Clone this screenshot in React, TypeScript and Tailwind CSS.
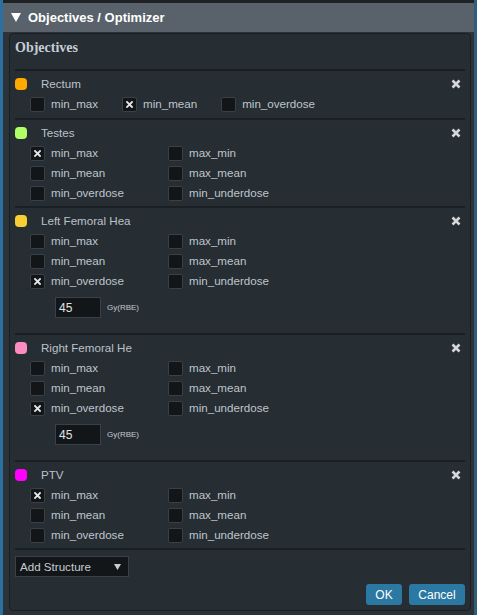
import React from 'react';

type Obj = { label: string; checked?: boolean };

interface Structure {
  name: string;
  color: string;
  inline?: boolean;
  objectives: Obj[];
  dose?: string;
}

const structures: Structure[] = [
  {
    name: 'Rectum',
    color: '#ffaa00',
    inline: true,
    objectives: [{ label: 'min_max' }, { label: 'min_mean', checked: true }, { label: 'min_overdose' }],
  },
  {
    name: 'Testes',
    color: '#b0ff66',
    objectives: [
      { label: 'min_max', checked: true },
      { label: 'max_min' },
      { label: 'min_mean' },
      { label: 'max_mean' },
      { label: 'min_overdose' },
      { label: 'min_underdose' },
    ],
  },
  {
    name: 'Left Femoral Hea',
    color: '#f7cf33',
    objectives: [
      { label: 'min_max' },
      { label: 'max_min' },
      { label: 'min_mean' },
      { label: 'max_mean' },
      { label: 'min_overdose', checked: true },
      { label: 'min_underdose' },
    ],
    dose: '45',
  },
  {
    name: 'Right Femoral He',
    color: '#ff8cbf',
    objectives: [
      { label: 'min_max' },
      { label: 'max_min' },
      { label: 'min_mean' },
      { label: 'max_mean' },
      { label: 'min_overdose', checked: true },
      { label: 'min_underdose' },
    ],
    dose: '45',
  },
  {
    name: 'PTV',
    color: '#ff00ff',
    objectives: [
      { label: 'min_max', checked: true },
      { label: 'max_min' },
      { label: 'min_mean' },
      { label: 'max_mean' },
      { label: 'min_overdose' },
      { label: 'min_underdose' },
    ],
  },
];

const Checkbox = ({ checked }: { checked?: boolean }) => (
  <span className="w-[15px] h-[15px] shrink-0 bg-[#131619] border border-[#3a4046] rounded-[2px] flex items-center justify-center">
    {checked && (
      <svg width="7" height="7" viewBox="0 0 7 7">
        <path d="M1 1L6 6M6 1L1 6" stroke="#e6e6e6" strokeWidth="1.8" strokeLinecap="square" />
      </svg>
    )}
  </span>
);

const Option = ({ o }: { o: Obj }) => (
  <div className="flex items-center h-[20px] gap-[6px]">
    <Checkbox checked={o.checked} />
    <span className="text-[11.6px] text-[#bfc5cb]">{o.label}</span>
  </div>
);

const CloseIcon = () => (
  <svg width="10" height="10" viewBox="0 0 10 10">
    <path d="M1.5 1.5L8.5 8.5M8.5 1.5L1.5 8.5" stroke="#d4d6d8" strokeWidth="2.6" />
  </svg>
);

export default function App() {
  return (
    <div
      className="w-[477px] h-[615px] bg-[#1e2327] border-l-[3px] border-l-[#2b70a0] border-r-[3px] border-r-[#2f5d7c] flex flex-col overflow-hidden"
      style={{ fontFamily: '"Liberation Sans", Arial, sans-serif' }}
    >
      <div className="h-[3px] shrink-0 bg-[#1e2225]" />
      {/* Header */}
      <div className="h-[29px] shrink-0 bg-[#59626a] flex items-center pl-[8px] gap-[7px]">
        <svg width="10" height="9" viewBox="0 0 10 9">
          <path d="M0 0H10L5 9Z" fill="#ffffff" />
        </svg>
        <span className="text-[13px] font-bold text-white">Objectives / Optimizer</span>
      </div>

      <div className="flex-1 bg-[#2c3338] pl-[6px] pr-[3px] pt-[1px] pb-[4px] flex flex-col min-h-0">
        <div className="flex-1 bg-[#262d33] border border-[#1a1f23] rounded-[4px] px-[5px] pt-[1px] pb-[5px] flex flex-col">
          <div
            className="h-[24px] flex items-center text-[14px] font-bold text-[#c5ced6] mb-[10px]"
            style={{ fontFamily: '"Liberation Serif", "Times New Roman", serif' }}
          >
            Objectives
          </div>

          {structures.map((s, i) => (
            <div key={s.name} className={`border-t-2 border-[#1a1f23] pt-[3px] ${i === 0 ? 'pb-[4px]' : 'pb-[3px]'}`}>
              <div className="h-[20px] flex items-center">
                <span className="w-[12px] h-[12px] rounded-[4px]" style={{ backgroundColor: s.color }} />
                <span className="ml-[14px] text-[11.6px] text-[#bcc2c8]">{s.name}</span>
                <span className="ml-auto mr-[4px] flex items-center">
                  <CloseIcon />
                </span>
              </div>
              {s.inline ? (
                <div className="flex pl-[15px] gap-x-[24px]">
                  {s.objectives.map((o) => (
                    <Option key={o.label} o={o} />
                  ))}
                </div>
              ) : (
                <div className="grid grid-cols-[138px_1fr] pl-[15px]">
                  {s.objectives.map((o) => (
                    <Option key={o.label} o={o} />
                  ))}
                </div>
              )}
              {s.dose && (
                <div className="flex items-center pl-[40px] mt-[6px] mb-[12px]">
                  <div className="w-[46px] h-[21px] bg-[#131619] border border-[#3a4046] flex items-center pl-[3px] text-[12px] text-[#e0e3e6]">
                    {s.dose}
                  </div>
                  <span className="ml-[6px] text-[8px] text-[#c4c9ce]">Gy(RBE)</span>
                </div>
              )}
            </div>
          ))}

          <div className="border-t-2 border-[#1a1f23] pt-[6px]">
            <div className="w-[114px] h-[21px] bg-[#131619] border border-[#3a4046] flex items-center pl-[4px] pr-[7px] text-[11.6px] text-[#c8ccd0]">
              <span>Add Structure</span>
              <svg className="ml-auto" width="7" height="6" viewBox="0 0 7 6">
                <path d="M0 0H7L3.5 6Z" fill="#c8ccd0" />
              </svg>
            </div>
          </div>

          <div className="mt-auto flex justify-end gap-[7px]">
            <button className="w-[36px] h-[21px] bg-[#2b78a2] rounded-[3px] text-[12px] text-white">OK</button>
            <button className="w-[56px] h-[21px] bg-[#2b78a2] rounded-[3px] text-[12px] text-white">Cancel</button>
          </div>
        </div>
      </div>
    </div>
  );
}
